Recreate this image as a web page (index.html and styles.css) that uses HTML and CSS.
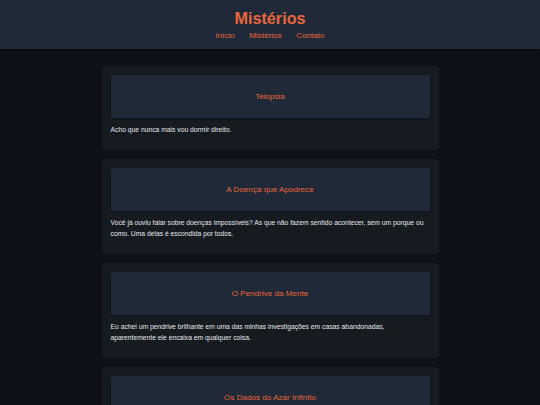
FILE: index.html
```html
<!DOCTYPE html>
<html lang="pt-BR">
<head>
<meta charset="utf-8">
<title>Mistérios</title>
<link rel="stylesheet" href="styles.css">
</head>
<body>
<header class="site-header">
  <h1 class="site-title">Mistérios</h1>
  <nav class="site-nav">
    <a href="#">Início</a>
    <a href="#">Mistérios</a>
    <a href="#">Contato</a>
  </nav>
</header>
<main class="content">
  <article class="card">
    <div class="card-head"><h2>Telopsia</h2></div>
    <p>Acho que nunca mais vou dormir direito.</p>
  </article>
  <article class="card">
    <div class="card-head"><h2>A Doença que Apodrece</h2></div>
    <p>Você já ouviu falar sobre doenças impossíveis? As que não fazem sentido acontecer, sem um porque ou como. Uma delas é escondida por todos.</p>
  </article>
  <article class="card">
    <div class="card-head"><h2>O Pendrive da Mente</h2></div>
    <p>Eu achei um pendrive brilhante em uma das minhas investigações em casas abandonadas, aparentemente ele encaixa em qualquer coisa.</p>
  </article>
  <article class="card">
    <div class="card-head"><h2>Os Dados do Azar Infinito</h2></div>
    <p>Dizem que quem joga esses dados nunca mais tem sorte.</p>
  </article>
</main>
</body>
</html>
```
FILE: styles.css
```css
html, body {
  margin: 0;
  padding: 0;
}
body {
  background: #0d1117;
  color: #e3e6ea;
  font-family: "Liberation Sans", Arial, sans-serif;
}
.site-header {
  background: #1f2937;
  text-align: center;
  padding: 8px 0 8px;
  box-shadow: 0 1px 2px rgba(0,0,0,0.4);
}
.site-title {
  margin: 0;
  font-size: 16.2px;
  line-height: 20px;
  font-weight: bold;
  color: #e8663d;
}
.site-nav {
  margin-top: 3px;
  display: flex;
  justify-content: center;
  gap: 14.5px;
  font-size: 8.1px;
  line-height: 10px;
}
.site-nav a {
  color: #e8663d;
  text-decoration: none;
}
.content {
  padding-top: 17px;
  display: flex;
  flex-direction: column;
  align-items: center;
  gap: 9px;
}
.card {
  width: 337px;
  box-sizing: border-box;
  background: #161b22;
  border-radius: 4px;
  padding: 9px 9px 9px;
}
.card-head {
  background: #1f2937;
  height: 43px;
  display: flex;
  align-items: center;
  justify-content: center;
  box-shadow: 0 1px 2px rgba(0,0,0,0.3);
}
.card-head h2 {
  margin: 0;
  font-size: 8.1px;
  font-weight: normal;
  color: #e8663d;
}
.card p {
  margin: 6px 0 5px;
  font-size: 6.75px;
  line-height: 11.5px;
}
```
